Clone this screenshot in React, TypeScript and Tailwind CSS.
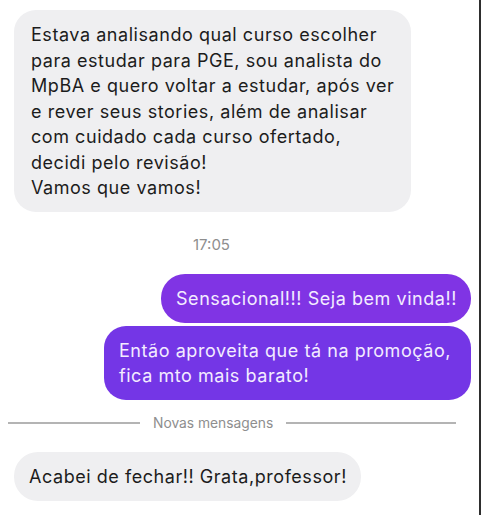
export default function App() {
  const font = { fontFamily: 'Inter, "Liberation Sans", Arial, sans-serif' }
  return (
    <div className="flex w-[483px] h-[515px] bg-white overflow-hidden" style={font}>
      <div className="flex-1 flex flex-col pt-[10px]">
        <div className="ml-[14px] w-[397px] rounded-[22px] bg-[#efeff1] pl-[17px] pt-[12px] pb-[11px] text-[18px] leading-[25.5px] tracking-[0.55px] text-[#1c1c1c] whitespace-nowrap">
          Estava analisando qual curso escolher
          <br />
          para estudar para PGE, sou analista do
          <br />
          MpBA e quero voltar a estudar, após ver
          <br />
          e rever seus stories, além de analisar
          <br />
          com cuidado cada curso ofertado,
          <br />
          decidi pelo revisão!
          <br />
          Vamos que vamos!
        </div>

        <div className="mt-[23px] ml-[193px] text-[15px] leading-[20px] text-[#8e8e8e]">17:05</div>

        <div className="mt-[19px] flex flex-col items-end gap-[3px] pr-[8px]">
          <div className="w-[310px] rounded-[24px] bg-[#8034e4] pl-[15px] py-[12px] text-[18px] leading-[25px] tracking-[0.55px] text-[#f3ecff] whitespace-nowrap">
            Sensacional!!! Seja bem vinda!!
          </div>
          <div className="w-[367px] rounded-[22px] bg-[#7436e6] pl-[15px] py-[12px] text-[18px] leading-[25px] tracking-[0.55px] text-[#f3ecff] whitespace-nowrap">
            Então aproveita que tá na promoção,
            <br />
            fica mto mais barato!
          </div>
        </div>

        <div className="mt-[15px] flex items-center pl-[8px] pr-[23px]">
          <div className="w-[132px] h-[2px] bg-[#b4b4b4]" />
          <div className="px-[13px] text-[13.8px] leading-[17px] text-[#8e8e8e]">Novas mensagens</div>
          <div className="flex-1 h-[2px] bg-[#b4b4b4]" />
        </div>

        <div className="mt-[20px] ml-[14px] w-[347px] rounded-[24px] bg-[#efeff1] pl-[15px] py-[12px] text-[18px] leading-[25px] tracking-[0.55px] text-[#1c1c1c] whitespace-nowrap">
          Acabei de fechar!! Grata,professor!
        </div>
      </div>
      <div className="w-[2px] bg-[#2e2e2e]" />
      <div className="w-[2px] bg-white" />
    </div>
  )
}
